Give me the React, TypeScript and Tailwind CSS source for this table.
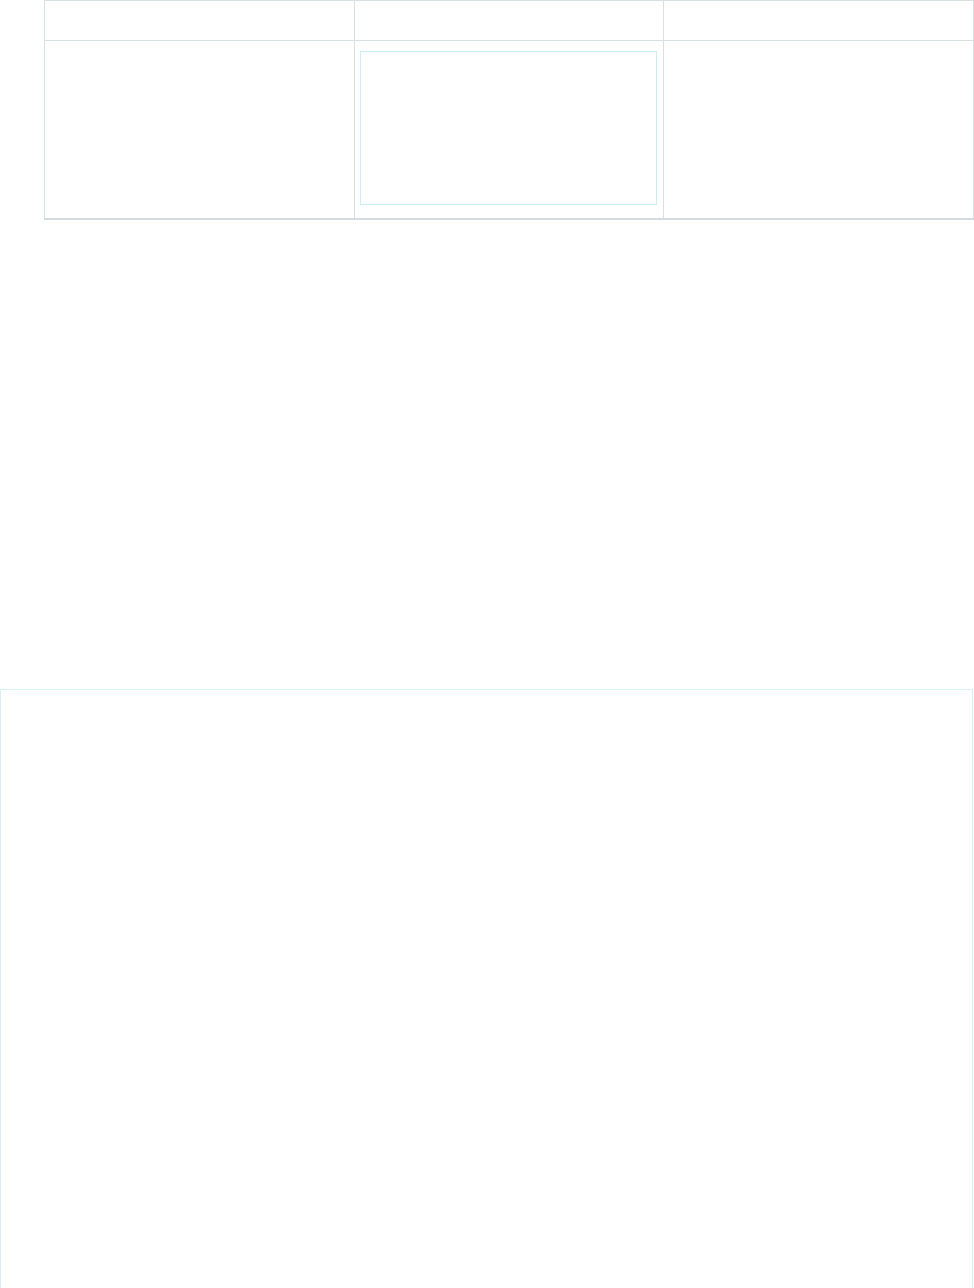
import React from 'react'

export default function App() {
    return (
        <div className="min-h-[1288px] bg-white font-['Liberation_Sans',sans-serif]">
            {/* comparison table */}
            <div className="pl-[44px]">
                <table className="w-[929px] table-fixed border-collapse border border-[#d3dbe0] border-b-2">
                    <thead>
                        <tr className="h-[40px]">
                            <th className="w-[310px] border border-[#d8e0e4]" />
                            <th className="w-[309px] border border-[#d8e0e4]" />
                            <th className="w-[310px] border border-[#d8e0e4]" />
                        </tr>
                    </thead>
                    <tbody>
                        <tr className="h-[178px] align-top">
                            <td className="border border-[#d8e0e4]" />
                            <td className="border border-[#d8e0e4] pt-[10px] pl-[5px] pr-[6px] pb-[13px]">
                                <div className="h-[154px] border border-[#c9eef6]" />
                            </td>
                            <td className="border border-[#d8e0e4]" />
                        </tr>
                    </tbody>
                </table>
            </div>

            {/* preview frame */}
            <div className="mt-[469px] h-[620px] w-[973px] border border-[#d4f1f7]" />
        </div>
    )
}
